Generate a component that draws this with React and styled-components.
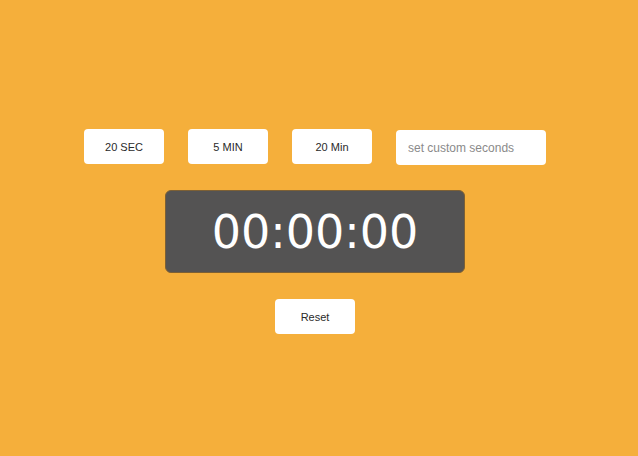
import React, { useState } from "react";
import styled, { createGlobalStyle } from "styled-components";

const Global = createGlobalStyle`
  html, body { margin: 0; padding: 0; background: #F5AF3B; }
  body { font-family: "Liberation Sans", Arial, sans-serif; }
`;

const Page = styled.div`
  width: 630px;
  height: 456px;
  background: #F5AF3B;
  display: flex;
  flex-direction: column;
  align-items: center;
  padding-top: 129px;
  box-sizing: border-box;
`;

const Row = styled.div`
  display: flex;
  align-items: flex-start;
  gap: 24px;
`;

const Button = styled.button`
  width: 80px;
  height: 35px;
  background: #fff;
  border: none;
  border-radius: 4px;
  font-family: "Liberation Sans", Arial, sans-serif;
  font-size: 11px;
  color: #2a2a2a;
  cursor: pointer;
  padding: 0;
  margin-top: ${(p) => p.$mt || 0}px;
`;

const Input = styled.input`
  width: 150px;
  height: 35px;
  box-sizing: border-box;
  margin-top: 1px;
  border: none;
  border-radius: 4px;
  background: #fff;
  padding: 0 12px;
  font-family: "Liberation Sans", Arial, sans-serif;
  font-size: 12px;
  color: #222;
  outline: none;
  &::placeholder { color: #8a8a8a; }
`;

const Display = styled.div`
  margin-top: 25px;
  width: 300px;
  height: 83px;
  box-sizing: border-box;
  background: #545353;
  border: 1px solid #7d6034;
  border-radius: 6px;
  display: flex;
  align-items: center;
  justify-content: center;
  color: #fff;
  font-family: "DejaVu Sans", "Open Sans", sans-serif;
  font-size: 46px;
`;

export default function App() {
  const [val, setVal] = useState("");
  return (
    <>
      <Global />
      <Page>
        <Row>
          <Button>20 SEC</Button>
          <Button>5 MIN</Button>
          <Button>20 Min</Button>
          <Input placeholder="set custom seconds" value={val} onChange={(e) => setVal(e.target.value)} />
        </Row>
        <Display>00:00:00</Display>
        <Button $mt={26}>Reset</Button>
      </Page>
    </>
  );
}
